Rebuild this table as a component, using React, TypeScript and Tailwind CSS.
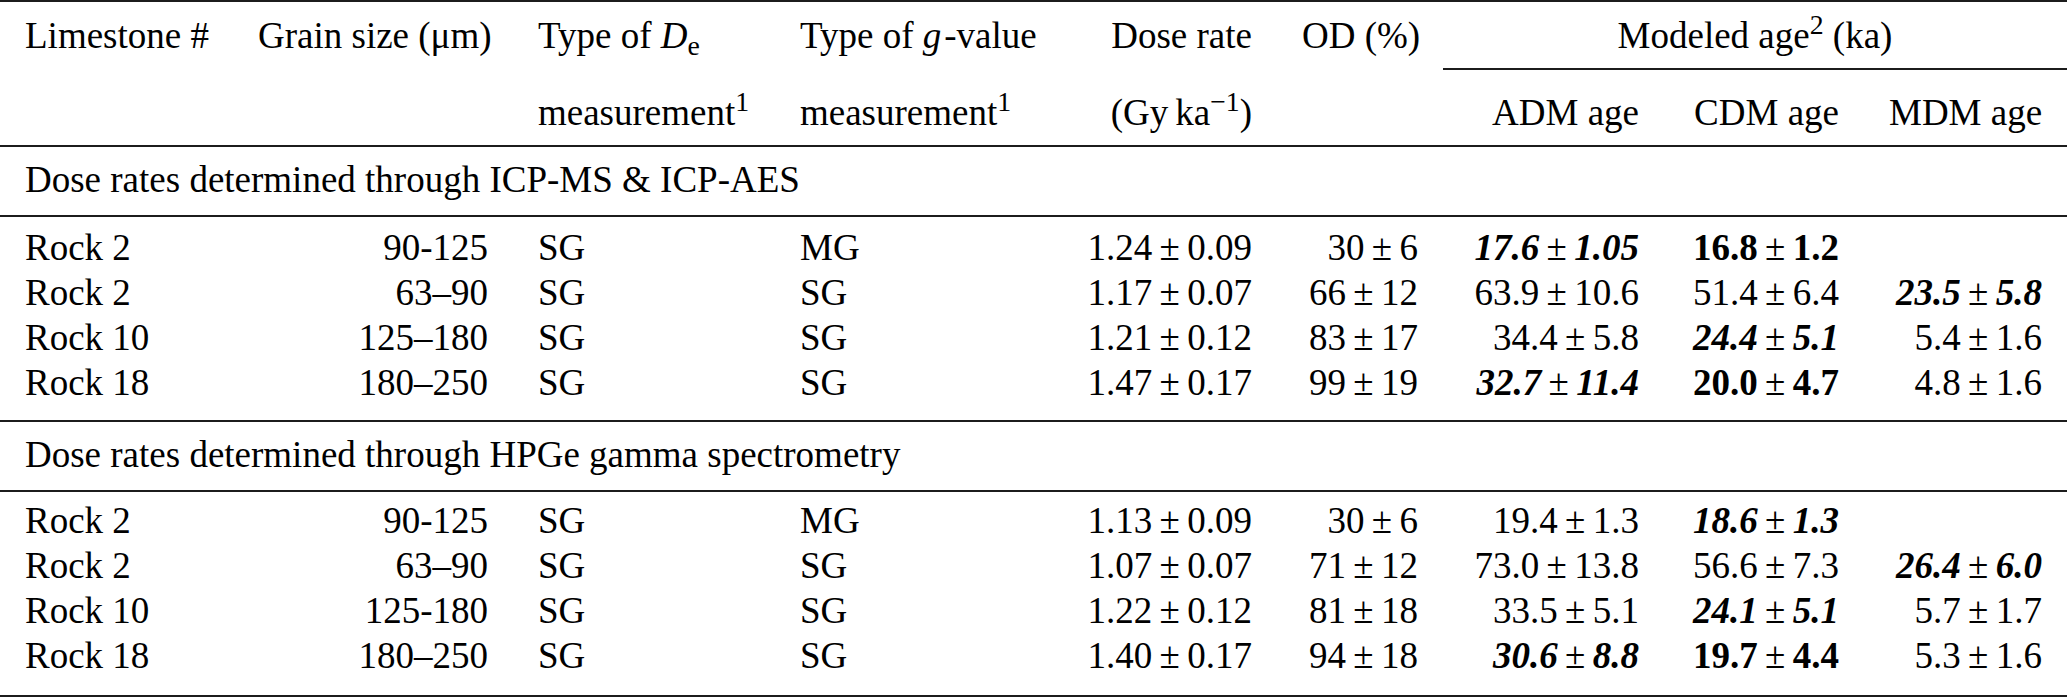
import React from "react";

type Style = "n" | "b" | "bi";
type Val = { a: string; b: string; s?: Style } | null;
type Row = {
  rock: string;
  grain: string;
  de: string;
  g: string;
  dose: Val;
  od: Val;
  adm: Val;
  cdm: Val;
  mdm: Val;
};

const v = (a: string, b: string, s: Style = "n"): Val => ({ a, b, s });

const icpRows: Row[] = [
  { rock: "Rock 2", grain: "90-125", de: "SG", g: "MG", dose: v("1.24", "0.09"), od: v("30", "6"), adm: v("17.6", "1.05", "bi"), cdm: v("16.8", "1.2", "b"), mdm: null },
  { rock: "Rock 2", grain: "63–90", de: "SG", g: "SG", dose: v("1.17", "0.07"), od: v("66", "12"), adm: v("63.9", "10.6"), cdm: v("51.4", "6.4"), mdm: v("23.5", "5.8", "bi") },
  { rock: "Rock 10", grain: "125–180", de: "SG", g: "SG", dose: v("1.21", "0.12"), od: v("83", "17"), adm: v("34.4", "5.8"), cdm: v("24.4", "5.1", "bi"), mdm: v("5.4", "1.6") },
  { rock: "Rock 18", grain: "180–250", de: "SG", g: "SG", dose: v("1.47", "0.17"), od: v("99", "19"), adm: v("32.7", "11.4", "bi"), cdm: v("20.0", "4.7", "b"), mdm: v("4.8", "1.6") },
];

const hpgeRows: Row[] = [
  { rock: "Rock 2", grain: "90-125", de: "SG", g: "MG", dose: v("1.13", "0.09"), od: v("30", "6"), adm: v("19.4", "1.3"), cdm: v("18.6", "1.3", "bi"), mdm: null },
  { rock: "Rock 2", grain: "63–90", de: "SG", g: "SG", dose: v("1.07", "0.07"), od: v("71", "12"), adm: v("73.0", "13.8"), cdm: v("56.6", "7.3"), mdm: v("26.4", "6.0", "bi") },
  { rock: "Rock 10", grain: "125-180", de: "SG", g: "SG", dose: v("1.22", "0.12"), od: v("81", "18"), adm: v("33.5", "5.1"), cdm: v("24.1", "5.1", "bi"), mdm: v("5.7", "1.7") },
  { rock: "Rock 18", grain: "180–250", de: "SG", g: "SG", dose: v("1.40", "0.17"), od: v("94", "18"), adm: v("30.6", "8.8", "bi"), cdm: v("19.7", "4.4", "b"), mdm: v("5.3", "1.6") },
];

function PlusMinus({ val }: { val: Val }) {
  if (!val) return null;
  const cls =
    val.s === "bi" ? "font-bold italic" : val.s === "b" ? "font-bold" : "";
  return (
    <span className="whitespace-nowrap">
      <span className={cls}>{val.a}</span>
      <span className="mx-[0.2em] font-normal not-italic">±</span>
      <span className={cls}>{val.b}</span>
    </span>
  );
}

const cell = "px-[25px] align-top whitespace-nowrap";

function Section({ title, rows, last }: { title: string; rows: Row[]; last?: boolean }) {
  return (
    <tbody>
      <tr>
        <td colSpan={9} className={`${cell} pt-[10px] pb-[13px] border-b-2 border-[#1c1c1c] text-left`}>
          {title}
        </td>
      </tr>
      {rows.map((r, i) => {
        const pad =
          (i === 0 ? (last ? "pt-[6px] " : "pt-[8px] ") : "") +
          (i === rows.length - 1
            ? (last ? "pb-[17px] border-b-2 border-[#1c1c1c]" : "pb-[15px] border-b-2 border-[#1c1c1c]")
            : "");
        return (
          <tr key={i}>
            <td className={`${cell} ${pad} text-left`}>{r.rock}</td>
            <td className={`${cell} ${pad} text-right`}>{r.grain}</td>
            <td className={`${cell} ${pad} text-left`}>{r.de}</td>
            <td className={`${cell} ${pad} text-left`}>{r.g}</td>
            <td className={`${cell} ${pad} text-right`}><PlusMinus val={r.dose} /></td>
            <td className={`${cell} ${pad} text-right`}><PlusMinus val={r.od} /></td>
            <td className={`${cell} ${pad} text-right`}><PlusMinus val={r.adm} /></td>
            <td className={`${cell} ${pad} text-right`}><PlusMinus val={r.cdm} /></td>
            <td className={`${cell} ${pad} text-right`}><PlusMinus val={r.mdm} /></td>
          </tr>
        );
      })}
    </tbody>
  );
}

export default function App() {
  const h1 = `${cell} pt-[11px] pb-[10px] border-t-2 border-[#1c1c1c]`;
  const h2 = `${cell} pt-[20px] pb-[10px] border-t-2`;

  return (
    <div className="w-[2067px] bg-white text-black font-['Liberation_Serif','Times_New_Roman',serif] text-[37px] leading-[45px]">
      <table className="w-full table-fixed border-separate border-spacing-0">
        <colgroup>
          <col className="w-[233px]" />
          <col className="w-[280px]" />
          <col className="w-[262px]" />
          <col className="w-[283px]" />
          <col className="w-[219px]" />
          <col className="w-[166px]" />
          <col className="w-[221px]" />
          <col className="w-[200px]" />
          <col className="w-[203px]" />
        </colgroup>
        <thead>
          <tr>
            <th className={`${h1} text-left font-normal`}>Limestone #</th>
            <th className={`${h1} text-right font-normal`}>Grain size (μm)</th>
            <th className={`${h1} text-left font-normal`}>
              Type of <i>D</i>
              <sub>e</sub>
            </th>
            <th className={`${h1} text-left font-normal`}>
              Type of <i className="mr-[3px]">g</i>-value
            </th>
            <th className={`${h1} text-right font-normal`}>Dose rate</th>
            <th className={`${h1} text-right font-normal`}>OD (%)</th>
            <th colSpan={3} className={`${h1} text-center font-normal`}>
              Modeled age<sup>2</sup> (ka)
            </th>
          </tr>
          <tr>
            <th className={`${h2} border-transparent font-normal`}></th>
            <th className={`${h2} border-transparent font-normal`}></th>
            <th className={`${h2} border-transparent text-left font-normal`}>
              measurement<sup>1</sup>
            </th>
            <th className={`${h2} border-transparent text-left font-normal`}>
              measurement<sup>1</sup>
            </th>
            <th className={`${h2} border-transparent text-right font-normal`}>
              (Gy<span className="ml-[7px]">ka</span>
              <sup>−1</sup>)
            </th>
            <th className={`${h2} border-transparent font-normal`}></th>
            <th className={`${h2} border-[#1c1c1c] text-right font-normal`}>ADM age</th>
            <th className={`${h2} border-[#1c1c1c] text-right font-normal`}>CDM age</th>
            <th className={`${h2} border-[#1c1c1c] text-right font-normal`}>MDM age</th>
          </tr>
          <tr>
            <th colSpan={9} className="h-0 p-0 border-b-2 border-[#1c1c1c]"></th>
          </tr>
        </thead>
        <Section title="Dose rates determined through ICP-MS & ICP-AES" rows={icpRows} />
        <Section title="Dose rates determined through HPGe gamma spectrometry" rows={hpgeRows} last />
      </table>
    </div>
  );
}
